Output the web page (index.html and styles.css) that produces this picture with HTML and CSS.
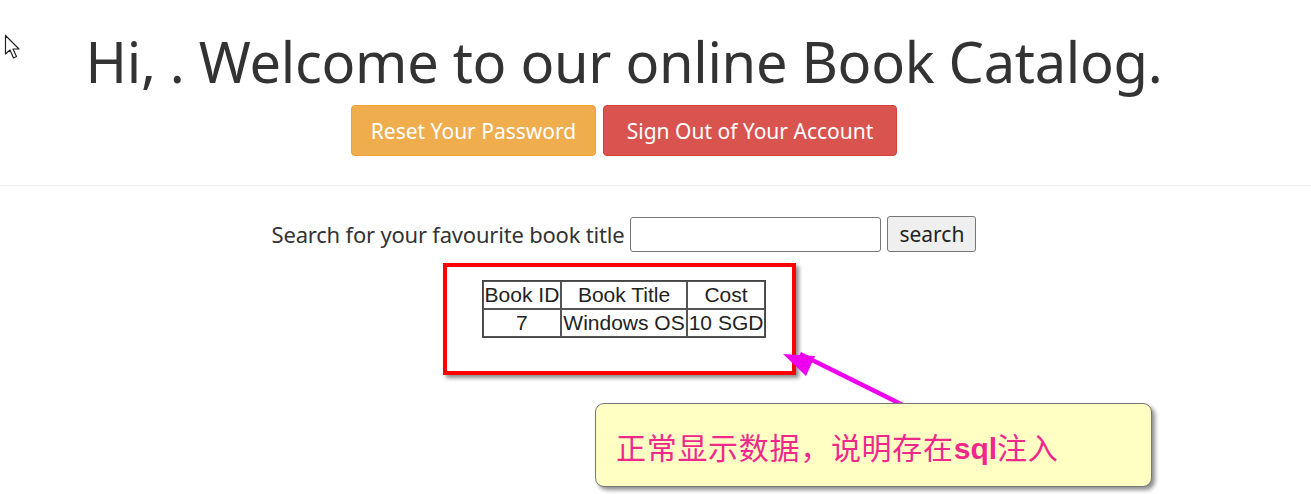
FILE: index.html
```html
<!DOCTYPE html>
<html>
<head>
<meta charset="utf-8">
<link rel="stylesheet" href="styles.css">
</head>
<body>
<div class="page">
  <header class="hero">
    <h1 class="title">Hi, . Welcome to our online Book Catalog.</h1>
    <div class="actions">
      <a class="btn btn-warning">Reset Your Password</a>
      <a class="btn btn-danger">Sign Out of Your Account</a>
    </div>
  </header>
</div>
<hr class="divider">
<div class="page">
  <form class="search">
    <label class="search-label">Search for your favourite book title</label>
    <input class="search-input" type="text">
    <button class="search-btn" type="button">search</button>
  </form>
  <div class="results">
    <table class="books">
      <tr><th>Book ID</th><th>Book Title</th><th>Cost</th></tr>
      <tr><td>7</td><td>Windows OS</td><td>10 SGD</td></tr>
    </table>
  </div>
</div>

<svg class="cursor" width="22" height="28" viewBox="0 0 22 28">
  <path d="M1.5 1.5 L1.5 20 L6 16 L9.5 24 L12.5 22.5 L9 15 L15 15 Z" fill="#fff" stroke="#222" stroke-width="1.2" stroke-linejoin="round"/>
</svg>
<div class="highlight"></div>
<svg class="arrow" width="180" height="90" viewBox="0 0 180 90">
  <defs>
    <linearGradient id="fade" x1="0" y1="0" x2="1" y2="0">
      <stop offset="0" stop-color="#ee00ee"/>
      <stop offset="0.78" stop-color="#ee00ee"/>
      <stop offset="1" stop-color="#f8c0cc"/>
    </linearGradient>
  </defs>
  <line x1="20" y1="12" x2="141" y2="72" stroke="url(#fade)" stroke-width="4.5"/>
  <polygon points="3,12 35,14 26,34" fill="#ee00ee"/>
</svg>
<div class="callout">正常显示数据，说明存在<b>sql</b>注入</div>
</body>
</html>
```
FILE: styles.css
```css
html, body {
  margin: 0;
  padding: 0;
  background: #fff;
}
body {
  font-family: "Noto Sans", "Open Sans", sans-serif;
  color: #333;
  position: relative;
  height: 494px;
  overflow: hidden;
}
.page {
  width: 1248px;
  text-align: center;
}
.hero {
  padding-top: 21px;
}
.title {
  margin: 0;
  font-weight: 400;
  font-size: 56px;
  line-height: 80px;
  color: #333;
  letter-spacing: -0.3px;
}
.actions {
  display: flex;
  justify-content: center;
  gap: 7px;
  margin-top: 4px;
}
.btn {
  display: inline-flex;
  align-items: center;
  justify-content: center;
  height: 51px;
  box-sizing: border-box;
  border-radius: 4px;
  color: #fff;
  font-size: 21px;
  border: 1px solid transparent;
}
.btn-warning {
  width: 245px;
  background: #f0ad4e;
  border-color: #eea236;
}
.btn-danger {
  width: 294px;
  background: #d9534f;
  border-color: #d43f3a;
}
.divider {
  border: 0;
  border-top: 1px solid #eee;
  margin: 29px 0 0 0;
}
.search {
  margin: 30px 0 0 0;
  display: flex;
  justify-content: center;
  align-items: center;
  gap: 6px;
  font-size: 22px;
  color: #333;
}
.search-label {
  letter-spacing: -0.2px;
}
.search-input {
  width: 251px;
  height: 35px;
  box-sizing: border-box;
  border: 1px solid #767676;
  border-radius: 3px;
  padding: 0 4px;
  margin: 0;
}
.search-btn {
  width: 89px;
  height: 36px;
  box-sizing: border-box;
  border: 1px solid #767676;
  border-radius: 3px;
  background: #efefef;
  font-family: inherit;
  font-size: 21px;
  color: #222;
  margin: 0;
  padding: 0;
}
.results {
  display: flex;
  justify-content: center;
  margin-top: 28px;
}
.books {
  border-collapse: separate;
  border-spacing: 0;
  border: 1px solid #444;
  font-family: "Liberation Sans", Arial, sans-serif;
  font-size: 21px;
  color: #222;
}
.books th, .books td {
  border: 1px solid #555;
  padding: 1px 1px;
  font-weight: 400;
  line-height: 24px;
  text-align: center;
}
.cursor {
  position: absolute;
  left: 4px;
  top: 34px;
}
.highlight {
  position: absolute;
  left: 443px;
  top: 263px;
  width: 353px;
  height: 112px;
  box-sizing: border-box;
  border: 4px solid #ff0000;
  box-shadow: 3px 3px 4px rgba(0,0,0,0.45);
}
.arrow {
  position: absolute;
  left: 780px;
  top: 342px;
}
.callout {
  position: absolute;
  left: 595px;
  top: 403px;
  width: 557px;
  height: 84px;
  box-sizing: border-box;
  background: #ffffc4;
  border: 1px solid #777;
  border-radius: 9px;
  box-shadow: 3px 3px 4px rgba(0,0,0,0.45);
  padding: 22px 0 0 20px;
  font-family: "Noto Sans CJK SC", sans-serif;
  font-size: 30px;
  letter-spacing: 0.7px;
  color: #f0288c;
  line-height: 40px;
}
.callout b {
  font-family: "Liberation Sans", Arial, sans-serif;
  font-weight: 700;
  letter-spacing: 0;
}
```
